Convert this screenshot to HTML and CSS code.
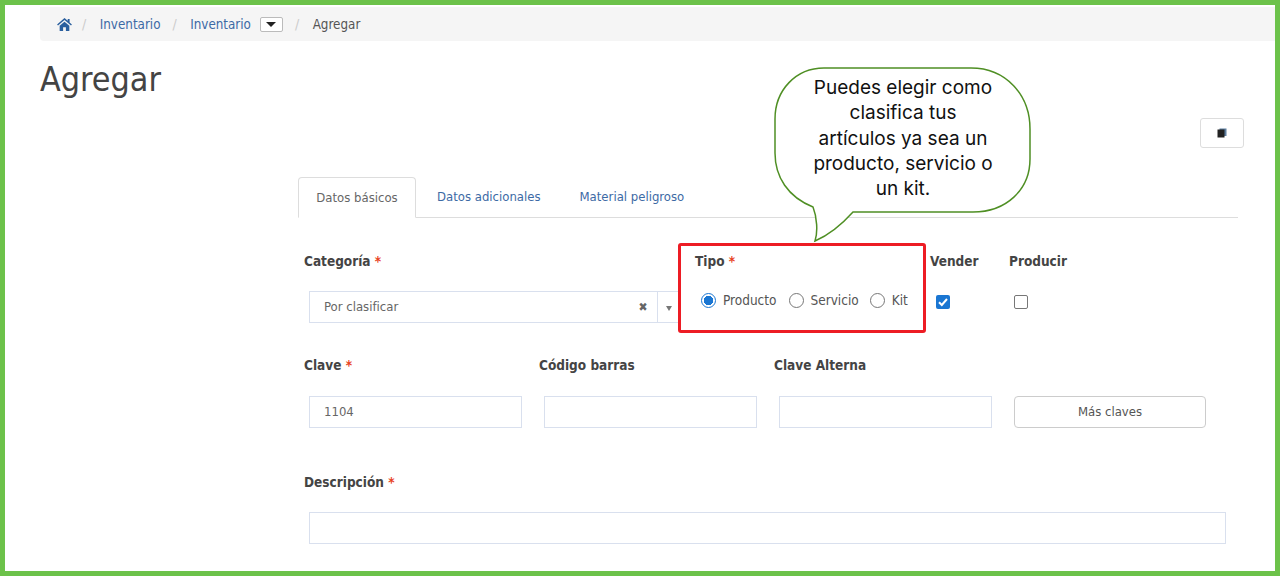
FILE: index.html
```html
<!DOCTYPE html>
<html lang="es">
<head>
<meta charset="utf-8">
<title>Agregar</title>
<link rel="stylesheet" href="styles.css">
</head>
<body>
<div class="frame">
  <nav class="crumbs">
    <svg class="home" viewBox="0 0 16 14" width="15" height="13"><path d="M8 0 0 7l1 1.200 7-6 7 6L16 7l-2.500-2.200V1h-2v2L8 0Z M2.800 8.400V14h3.700v-4h3v4h3.700V8.400L8 4 2.800 8.400Z" fill="#2a5f9e"/></svg>
    <span class="sep">/</span>
    <a class="crumb">Inventario</a>
    <span class="sep">/</span>
    <a class="crumb">Inventario</a>
    <span class="caret-btn"><i class="caret"></i></span>
    <span class="sep">/</span>
    <span class="crumb-current">Agregar</span>
  </nav>
  <h1 class="title">Agregar</h1>
  <div class="tools">
    <button class="copy-btn"><svg viewBox="0 0 10 10" width="10" height="10"><rect x="2.500" y="0.500" width="7" height="7.500" fill="#5d7ea0"/><rect x="0.500" y="1.500" width="7" height="8" fill="#222"/></svg></button>
  </div>
  <main class="content">
    <div class="tabs">
      <a class="tab active">Datos básicos</a>
      <a class="tab">Datos adicionales</a>
      <a class="tab">Material peligroso</a>
    </div>
    <div class="row row-one">
      <div class="col col-cat">
        <label class="lbl">Categoría <b class="req">*</b></label>
        <div class="select">
          <span class="select-val">Por clasificar</span>
          <span class="select-x">✖</span>
          <span class="select-arrow"><i class="mini-caret"></i></span>
        </div>
      </div>
      <div class="col col-tipo">
        <label class="lbl">Tipo <b class="req">*</b></label>
        <div class="radios">
          <span class="radio on"></span><span class="radio-txt txt-prod">Producto</span>
          <span class="radio"></span><span class="radio-txt txt-serv">Servicio</span>
          <span class="radio"></span><span class="radio-txt">Kit</span>
        </div>
      </div>
      <div class="col col-vender">
        <label class="lbl">Vender</label>
        <span class="check on"><svg viewBox="0 0 14 14" width="14" height="14"><path d="M3 7.300 5.800 10 11 4" fill="none" stroke="#fff" stroke-width="2"/></svg></span>
      </div>
      <div class="col col-prod">
        <label class="lbl">Producir</label>
        <span class="check"></span>
      </div>
    </div>
    <div class="row row-two">
      <div class="col col-key">
        <label class="lbl">Clave <b class="req">*</b></label>
        <div class="field">1104</div>
      </div>
      <div class="col col-key">
        <label class="lbl">Código barras</label>
        <div class="field"></div>
      </div>
      <div class="col col-key">
        <label class="lbl">Clave Alterna</label>
        <div class="field"></div>
      </div>
      <div class="col col-more">
        <button class="more-btn">Más claves</button>
      </div>
    </div>
    <div class="row row-three">
      <div class="col col-desc">
        <label class="lbl">Descripción <b class="req">*</b></label>
        <div class="field field-wide"></div>
      </div>
    </div>
  </main>
  <div class="red-box"></div>
  <div class="bubble">
    <svg class="bubble-shape" viewBox="0 0 258 178" width="258" height="178"><path d="M39 140C14 130 1 110 1 86V52C1 23 22 1 50 1H197C232 1 256 28 256 62V92C256 123 232 145 199 145H79C70 155 55 168 41 174C44 165 43 150 39 140Z" fill="#fff" stroke="#4f8f24" stroke-width="1.500"/></svg>
    <p class="bubble-text">Puedes elegir como clasifica tus artículos ya sea un producto, servicio o un kit.</p>
  </div>
</div>
</body>
</html>
```

FILE: styles.css
```css
* { box-sizing: border-box; }
html, body { margin: 0; padding: 0; background: #fff; }
body { font-family: "DejaVu Sans", "Noto Sans", sans-serif; font-stretch: condensed; font-size: 13px; color: #555; }

.frame {
  position: relative;
  width: 1280px;
  height: 576px;
  border: 5px solid #6cc24a;
  overflow: hidden;
}

.crumbs {
  display: flex;
  align-items: center;
  height: 34px;
  margin: 2px 0 0 35px;
  padding-left: 17px;
  background: #f5f5f5;
  border-radius: 0 0 0 4px;
  font-size: 13.300px;
}
.home { margin-right: 10px; }
.sep { color: #ccc; font-size: 14px; margin-right: 13.500px; }
.crumb { color: #3d6aa5; margin-right: 12px; }
.crumb-current { color: #555; }
.caret-btn {
  display: flex;
  align-items: center;
  justify-content: center;
  width: 23px;
  height: 15px;
  margin: 1px 12px 0 -3px;
  background: #fff;
  border: 1px solid #bbb;
  border-radius: 2px;
}
.caret { border: 5px solid transparent; border-top: 5px solid #222; border-bottom: 0; }

.title {
  margin: 16px 0 0 35px;
  font-size: 33.800px;
  line-height: 46px;
  font-weight: 400;
  color: #444;
}

.tools { display: flex; justify-content: flex-end; margin: 15px 31px 0 0; }
.copy-btn {
  display: flex;
  align-items: center;
  justify-content: center;
  width: 44px;
  height: 30px;
  padding: 0;
  background: #fff;
  border: 1px solid #ddd;
  border-radius: 3px;
}

.content { margin: 29px 0 0 293px; width: 940px; }

.tabs { display: flex; height: 41px; border-bottom: 1px solid #ddd; }
.tab { padding: 0 19px 0 20px; line-height: 40px; color: #3d6aa5; }
.active {
  width: 118px;
  height: 41px;
  padding: 0;
  margin-right: 1px;
  text-align: center;
  color: #666;
  background: #fff;
  border: 1px solid #ddd;
  border-bottom-color: #fff;
  border-radius: 4px 4px 0 0;
}

.row { display: flex; margin-left: 6px; }
.row-one { margin-top: 32px; }
.row-two { margin-top: 32px; }
.row-three { margin-top: 43px; }

.col { display: flex; flex-direction: column; align-items: flex-start; }
.col-cat { width: 391px; }
.col-tipo { width: 235px; }
.col-vender { width: 79px; }
.col-key { width: 235px; }
.col-more { width: 192px; padding-top: 41px; margin-left: 5px; }
.col-desc { width: 922px; }

.lbl { height: 20px; margin-top: 1px; line-height: 20px; font-size: 13.500px; font-weight: 700; color: #444; }
.req { color: #e8401c; }

.row-two .lbl { margin-top: 0; }
.row-two .field { margin-top: 21px; }

.select {
  display: flex;
  align-items: center;
  width: 371px;
  height: 32px;
  margin: 20px 0 0 5px;
  border: 1px solid #d9e0ee;
  background: #fff;
}
.select-val { flex: 1; padding: 0 0 2px 14px; color: #666; }
.select-x { width: 20px; font-size: 12px; color: #666; text-align: center; margin-right: 4px; }
.select-arrow {
  display: flex;
  align-items: center;
  justify-content: center;
  width: 22px;
  height: 100%;
  border-left: 1px solid #d9e0ee;
}
.mini-caret { border: 3.500px solid transparent; border-top: 5px solid #777; border-bottom: 0; margin-top: 3px; }

.radios { display: flex; align-items: center; height: 16px; margin: 21px 0 0 6px; }
.radio {
  flex: none;
  width: 15px;
  height: 15px;
  border: 1.500px solid #777;
  border-radius: 50%;
  background: #fff;
}
.radio.on { border-color: #1a76d2; background: radial-gradient(circle, #1a76d2 0 4.500px, #fff 5px); }
.radio-txt { margin-left: 7px; font-size: 13.500px; color: #555; }
.txt-prod { margin-right: 12px; }
.txt-serv { margin-right: 11px; }

.check {
  display: block;
  width: 14px;
  height: 14px;
  margin: 24px 0 0 6px;
  border: 1px solid #777;
  border-radius: 2px;
  background: #fff;
}
.col-prod .check { margin-left: 5px; }
.check.on { border: 0; background: #1a76d2; }
.check svg { display: block; }

.field {
  width: 213px;
  height: 32px;
  margin: 20px 0 0 5px;
  padding-left: 14px;
  line-height: 30px;
  border: 1px solid #d9e0ee;
  color: #666;
  background: #fff;
}
.field-wide { width: 917px; }

.more-btn {
  width: 192px;
  height: 32px;
  padding: 0 0 2px;
  font: inherit;
  color: #555;
  background: #fff;
  border: 1px solid #ccc;
  border-radius: 4px;
}

.red-box {
  position: absolute;
  left: 673px;
  top: 238px;
  width: 248px;
  height: 90px;
  border: 3px solid #ed1c24;
  border-radius: 3px;
}

.bubble { position: absolute; left: 769px; top: 62px; width: 258px; height: 178px; }
.bubble-shape { position: absolute; left: 0; top: 0; }
.bubble-text {
  position: relative;
  margin: 0 auto;
  padding-top: 8px;
  width: 185px;
  font-family: "Inter", sans-serif;
  font-stretch: normal;
  font-size: 19px;
  line-height: 25.300px;
  text-align: center;
  color: #111;
}
```
